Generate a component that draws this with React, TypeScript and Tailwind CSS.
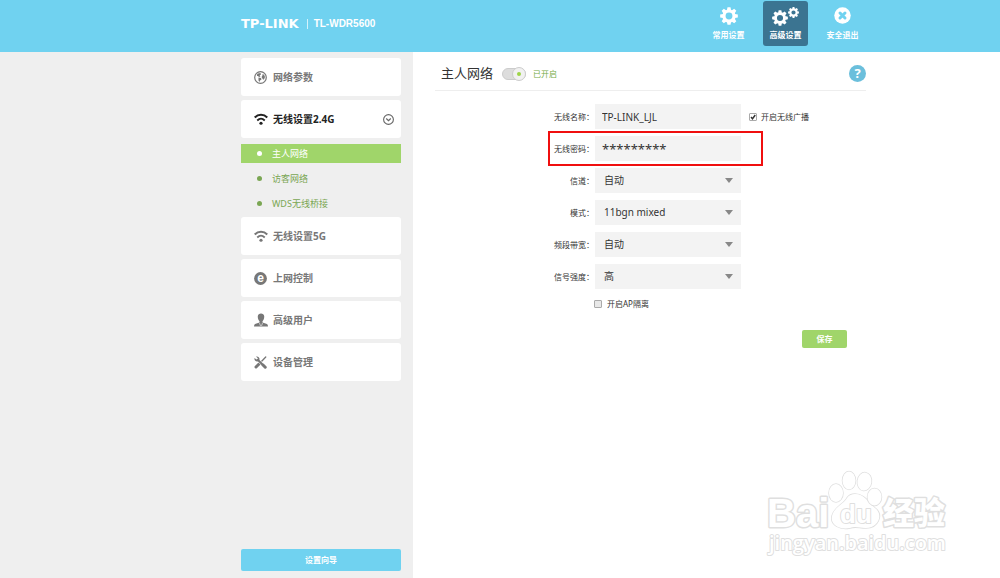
import { useState } from 'react';
import type { ReactNode } from 'react';
import clsx from 'clsx';

function Gear({ className }: { className?: string }) {
  return (
    <svg viewBox="0 0 34 34" className={className} aria-hidden="true">
      <circle cx="17" cy="17" r="9.5" fill="none" stroke="currentColor" strokeWidth="6" />
      {[0, 45, 90, 135, 180, 225, 270, 315].map((angle) => (
        <path key={angle} d="M13 6 L14.2 0.3 H19.8 L21 6 Z" fill="currentColor" transform={`rotate(${angle} 17 17)`} />
      ))}
    </svg>
  );
}

function CloseIcon() {
  return (
    <svg viewBox="0 0 34 34" className="size-[17px]" aria-hidden="true">
      <circle cx="17" cy="17" r="16.5" fill="#fff" />
      <path d="M12 12 L22 22 M22 12 L12 22" stroke="#70d2f0" strokeWidth="6" strokeLinecap="round" />
    </svg>
  );
}

function GlobeIcon() {
  return (
    <svg viewBox="0 0 26 26" className="size-[13px]" aria-hidden="true">
      <circle cx="13" cy="13" r="11.6" fill="none" stroke="currentColor" strokeWidth="2.4" />
      <path d="M8 5 L13 4 L14 7 L11 9 L13 11 L10 12 L8 10 L6 10 L6 7 Z" fill="currentColor" />
      <path d="M9 13 L14 14 L15 17 L12 19 L11 22 L9 19 Z" fill="currentColor" />
      <path d="M16 7 L20 7 L22 12 L20 17 L18 17 L15 12 L17 9 Z" fill="currentColor" />
    </svg>
  );
}

function WifiIcon() {
  return (
    <svg viewBox="0 0 28 24" className="h-3 w-3.5" aria-hidden="true">
      <path d="M1.5 9 C8.5 1.5 19.5 1.5 26.5 9" fill="none" stroke="currentColor" strokeWidth="4" />
      <path d="M6.5 15 C11 10.5 17 10.5 21.5 15" fill="none" stroke="currentColor" strokeWidth="3.6" />
      <circle cx="14" cy="20.5" r="3.2" fill="currentColor" />
    </svg>
  );
}

function BrowserIcon() {
  return (
    <svg viewBox="0 0 26 26" className="size-[13px]" aria-hidden="true">
      <circle cx="13" cy="13" r="12.8" fill="currentColor" />
      <text x="13" y="19.5" textAnchor="middle" fill="#fff" fontSize="24" fontWeight="700" fontFamily="Liberation Sans, sans-serif">e</text>
    </svg>
  );
}

function UserIcon() {
  return (
    <svg viewBox="0 0 28 28" className="size-3.5" aria-hidden="true">
      <path d="M7.5 7 C7.5 -1 20.500 -1 20.500 7 C20.500 12 18.5 15 17 16.5 V19 L26 22 Q28 23 28 27 H0 Q0 23 2 22 L11 19 V16.5 C9.5 15 7.5 12 7.5 7 Z" fill="currentColor" />
      <path d="M11 20 L13 26 M17 20 L15 26" stroke="#fff" strokeWidth="1.2" />
    </svg>
  );
}

function ToolsIcon() {
  return (
    <svg viewBox="0 0 26 26" className="size-[13px]" aria-hidden="true">
      <path d="M23.5 2 L12 14" stroke="currentColor" strokeWidth="2.6" strokeLinecap="round" />
      <path d="M10.5 15.5 L4 22" stroke="currentColor" strokeWidth="6" strokeLinecap="round" />
      <path d="M9 9 L15 15" stroke="#fff" strokeWidth="6" />
      <path d="M4 1 C8 0 12 3 11 8 L18 15 L15 18 L8 11 C4 12 0 9 1 4 L5 7 L8 5 Z" fill="currentColor" />
      <path d="M17.5 17.5 L22.5 22.5" stroke="currentColor" strokeWidth="6" strokeLinecap="round" />
    </svg>
  );
}

function ChevronIcon() {
  return (
    <svg viewBox="0 0 22 22" className="size-[11px]" aria-hidden="true">
      <circle cx="11" cy="11" r="9.8" fill="none" stroke="#666" strokeWidth="2.2" />
      <path d="M6.5 9 L11 13.5 L15.5 9" fill="none" stroke="#666" strokeWidth="2.4" />
    </svg>
  );
}

function Watermark() {
  return (
    <svg viewBox="0 0 184 92" className="pointer-events-none absolute right-[50px] bottom-4 h-[92px] w-[184px]" aria-hidden="true">
      <g fill="#fff" stroke="#dfdfdf" strokeWidth="3" strokeLinejoin="round" paintOrder="stroke">
        <text x="1" y="57" fontSize="40" fontWeight="700" fontFamily="Liberation Sans, sans-serif">Bai</text>
        <g strokeWidth="1.5">
          <path d="M89 24 C98 24 102 32 109 38 C118 45 112 58 100 58 C93 58 90 56 84 58 C74 60 64 55 66 46 C68 37 78 34 81 28 C83 25 86 24 89 24 Z" />
          <ellipse cx="70" cy="23" rx="7" ry="9" />
          <ellipse cx="83" cy="10.500" rx="6.500" ry="9" />
          <ellipse cx="98.500" cy="11.500" rx="7" ry="9" transform="rotate(8 98 11)" />
          <ellipse cx="108.500" cy="27" rx="7" ry="8.500" />
        </g>
        <text x="74" y="53" fontSize="26" fontWeight="700" strokeWidth="2" fontFamily="Liberation Sans, sans-serif">du</text>
        <text x="117" y="54" fontSize="31" fontWeight="900" fontFamily="Noto Sans CJK SC, sans-serif">经验</text>
        <text x="3" y="80" fontSize="20" fontWeight="600" strokeWidth="2" fontFamily="Open Sans, sans-serif">jingyan.baidu.com</text>
      </g>
    </svg>
  );
}

interface NavItem {
  label: string;
  icon: ReactNode;
}

const topNav: NavItem[] = [
  { label: '常用设置', icon: <Gear className="size-[18px]" /> },
  {
    label: '高级设置',
    icon: (
      <span className="flex items-start">
        <Gear className="mt-[3px] size-4" />
        <Gear className="size-[11px]" />
      </span>
    ),
  },
  { label: '安全退出', icon: <CloseIcon /> },
];

const wifiPages = ['主人网络', '访客网络', 'WDS无线桥接'];

const selects = [
  { id: 'channel', label: '信道', options: ['自动', '1', '6', '11'] },
  { id: 'mode', label: '模式', options: ['11bgn mixed', '11bg mixed', '11n only'] },
  { id: 'bandwidth', label: '频段带宽', options: ['自动', '20MHz', '40MHz'] },
  { id: 'power', label: '信号强度', options: ['高', '中', '低'] },
];

function MenuCard({ label, icon, open }: NavItem & { open?: boolean }) {
  return (
    <button
      type="button"
      className={clsx(
        'flex h-[38px] w-full items-center rounded-[3px] bg-white pr-[7px] pl-[13px] text-left text-[10px] font-bold',
        open ? 'text-[#222]' : 'text-[#777]',
      )}
    >
      <span className="flex w-[19px] items-center">{icon}</span>
      <span className="flex-1">{label}</span>
      {open && <ChevronIcon />}
    </button>
  );
}

function Field({ id, label, highlight, children }: { id: string; label: string; highlight?: boolean; children: ReactNode }) {
  return (
    <div className="relative flex items-center">
      <label htmlFor={id} className="mr-px w-10 shrink-0 text-right whitespace-nowrap">{label}：</label>
      {children}
      {highlight && <div className="pointer-events-none absolute -top-[5px] -left-1.5 h-[35px] w-[215px] border-2 border-[#f00f0f]" />}
    </div>
  );
}

const checkboxClass =
  'relative size-2 appearance-none rounded-[1px] border border-[#aaa] bg-[#e8e8e8] checked:bg-white';

export default function App() {
  const [page, setPage] = useState('主人网络');
  const [broadcast, setBroadcast] = useState(true);

  return (
    <div className="relative flex min-h-screen flex-col bg-white font-['Noto_Sans','Noto_Sans_CJK_SC',sans-serif] text-[8px] text-[#333]">
      <header className="flex h-13 bg-[#70d2f0] text-white">
        <div className="flex w-[413px] shrink-0 items-center pb-[5px] pl-[241px]">
          <span className="font-['DejaVu_Sans',sans-serif] text-[13px] leading-none font-bold">TP-LINK</span>
          <span className="ml-2 border-l border-white/70 pl-1.5 font-['Liberation_Sans',sans-serif] text-[10px] leading-none font-bold">TL-WDR5600</span>
        </div>
        <nav className="flex max-w-[452px] flex-1 items-start justify-end gap-3 pt-px">
          {topNav.map((item) => (
            <a
              key={item.label}
              href="#"
              className={clsx(
                'flex h-[45px] w-[45px] flex-col items-center rounded-[3px] pt-1.5 font-bold whitespace-nowrap',
                item.label === '高级设置' && 'bg-[#3b7491]',
              )}
            >
              <span className="flex h-[22px] items-start">{item.icon}</span>
              <span className="leading-3">{item.label}</span>
            </a>
          ))}
        </nav>
      </header>

      <div className="flex flex-1">
        <aside className="flex w-[413px] shrink-0 flex-col bg-[#efefef] pt-1.5 pr-3 pb-[7px] pl-[241px]">
          <div className="flex flex-col gap-1">
            <MenuCard label="网络参数" icon={<GlobeIcon />} />
            <MenuCard label="无线设置2.4G" icon={<WifiIcon />} open />
            <ul className="flex flex-col gap-1.5 pt-0.5 text-[9px]">
              {wifiPages.map((name) => (
                <li key={name}>
                  <a
                    href="#"
                    onClick={() => setPage(name)}
                    className={clsx(
                      'flex h-[19px] items-center gap-2.5 pl-4',
                      name === page ? 'bg-[#a0d56a] text-white' : 'text-[#7aa653]',
                    )}
                  >
                    <span className="size-[5px] rounded-full bg-current" />
                    {name}
                  </a>
                </li>
              ))}
            </ul>
            <MenuCard label="无线设置5G" icon={<WifiIcon />} />
            <MenuCard label="上网控制" icon={<BrowserIcon />} />
            <MenuCard label="高级用户" icon={<UserIcon />} />
            <MenuCard label="设备管理" icon={<ToolsIcon />} />
          </div>
          <button type="button" className="mt-auto h-[22px] rounded-[2px] bg-[#70d2f0] font-bold text-white">
            设置向导
          </button>
        </aside>

        <main className="flex-1 pl-[22px]">
          <div className="max-w-[431px]">
            <div className="flex h-[39px] items-center border-b border-[#eee] pt-[5px] pl-1.5">
              <h1 className="text-[13px]">主人网络</h1>
              <button
                type="button"
                role="switch"
                aria-checked="true"
                aria-label="主人网络"
                className="ml-[9px] flex h-3 w-6 items-center justify-end rounded-full border border-[#ccc] bg-[#ddd]"
              >
                <span className="-mr-px flex size-3.5 shrink-0 items-center justify-center rounded-full border border-[#ccc] bg-[#f1f1f1]">
                  <span className="size-1 rounded-full bg-[#9ed447]" />
                </span>
              </button>
              <span className="ml-[7px] text-[#74ab46]">已开启</span>
              <button type="button" aria-label="帮助" className="ml-auto size-[17px] rounded-full bg-[#6bbfdc] text-[13px] leading-[17px] font-bold text-white">
                ?
              </button>
            </div>

            <form className="flex flex-col gap-[7px] pt-[13px] pl-[119px]" onSubmit={(e) => e.preventDefault()}>
              <Field id="ssid" label="无线名称">
                <input id="ssid" type="text" defaultValue="TP-LINK_LJL" className="h-[25px] w-[146px] bg-[#f3f3f3] px-[7px] text-[10px]" />
                <label className="ml-2 flex items-center gap-1 whitespace-nowrap">
                  <span className="relative flex">
                    <input type="checkbox" checked={broadcast} onChange={(e) => setBroadcast(e.target.checked)} className={checkboxClass} />
                    {broadcast && (
                      <svg viewBox="0 0 16 16" className="pointer-events-none absolute inset-0 size-2" aria-hidden="true">
                        <path d="M4 8 L7 11.500 L12.500 4" fill="none" stroke="#333" strokeWidth="2.800" />
                      </svg>
                    )}
                  </span>
                  开启无线广播
                </label>
              </Field>
              <Field id="password" label="无线密码" highlight>
                <input id="password" type="text" defaultValue="*********" className="h-[25px] w-[146px] bg-[#f3f3f3] px-[7px] text-[13px]" />
              </Field>
              {selects.map((item) => (
                <Field key={item.id} id={item.id} label={item.label}>
                  <div className="relative flex">
                    <select id={item.id} className="h-[25px] w-[146px] appearance-none bg-[#f3f3f3] pl-[9px] text-[10px]">
                      {item.options.map((option) => (
                        <option key={option}>{option}</option>
                      ))}
                    </select>
                    <svg viewBox="0 0 8 5" className="pointer-events-none absolute top-2.5 right-2 h-[5px] w-2" aria-hidden="true">
                      <path d="M0 0 H8 L4 5 Z" fill="#888" />
                    </svg>
                  </div>
                </Field>
              ))}
              <label className="ml-10 flex h-4 items-center gap-[5px]">
                <input type="checkbox" className={checkboxClass} />
                开启AP隔离
              </label>
              <button type="submit" className="mt-[11px] mr-[19px] h-[18px] w-[45px] self-end rounded-[2px] bg-[#a0d56a] font-bold text-white">
                保存
              </button>
            </form>
          </div>
        </main>
      </div>
      <Watermark />
    </div>
  );
}
